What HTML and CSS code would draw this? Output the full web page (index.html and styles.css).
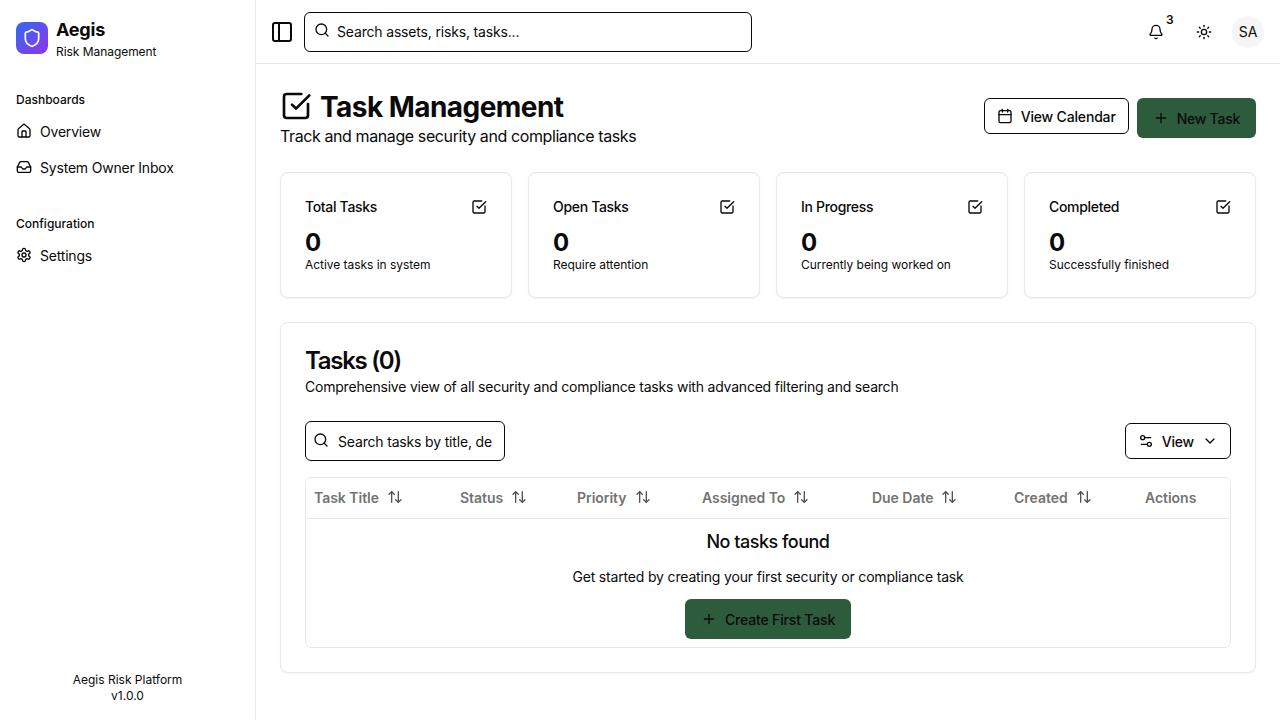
FILE: index.html
```html
<!DOCTYPE html>
<html lang="en">
<head>
  <meta charset="UTF-8">
  <title>Task Management | Aegis</title>
  <link rel="stylesheet" href="styles.css">
</head>
<body>
  <div class="app">

    <!-- Sidebar -->
    <aside class="sidebar">
      <div class="brand">
        <div class="brand-logo">
          <svg width="20" height="20" viewBox="0 0 24 24" class="ic"><path d="M20 13c0 5-3.5 7.5-7.66 8.95a1 1 0 0 1-.67-.01C7.5 20.5 4 18 4 13V6a1 1 0 0 1 1-1c2 0 4.5-1.2 6.24-2.72a1.17 1.17 0 0 1 1.52 0C14.51 3.81 17 5 19 5a1 1 0 0 1 1 1z"/></svg>
        </div>
        <div>
          <div class="brand-name">Aegis</div>
          <div class="brand-sub">Risk Management</div>
        </div>
      </div>

      <div class="nav-label">Dashboards</div>
      <a class="nav-item">
        <svg width="16" height="16" viewBox="0 0 24 24" class="ic"><path d="M15 21v-8a1 1 0 0 0-1-1h-4a1 1 0 0 0-1 1v8"/><path d="M3 10a2 2 0 0 1 .709-1.528l7-5.999a2 2 0 0 1 2.582 0l7 5.999A2 2 0 0 1 21 10v9a2 2 0 0 1-2 2H5a2 2 0 0 1-2-2z"/></svg>
        Overview
      </a>
      <a class="nav-item">
        <svg width="16" height="16" viewBox="0 0 24 24" class="ic"><polyline points="22 12 16 12 14 15 10 15 8 12 2 12"/><path d="M5.45 5.11 2 12v6a2 2 0 0 0 2 2h16a2 2 0 0 0 2-2v-6l-3.45-6.89A2 2 0 0 0 16.76 4H7.24a2 2 0 0 0-1.79 1.11z"/></svg>
        System Owner Inbox
      </a>

      <div class="nav-label nav-label-second">Configuration</div>
      <a class="nav-item">
        <svg width="16" height="16" viewBox="0 0 24 24" class="ic"><path d="M12.22 2h-.44a2 2 0 0 0-2 2v.18a2 2 0 0 1-1 1.73l-.43.25a2 2 0 0 1-2 0l-.15-.08a2 2 0 0 0-2.73.73l-.22.38a2 2 0 0 0 .73 2.73l.15.1a2 2 0 0 1 1 1.72v.51a2 2 0 0 1-1 1.74l-.15.09a2 2 0 0 0-.73 2.73l.22.38a2 2 0 0 0 2.73.73l.15-.08a2 2 0 0 1 2 0l.43.25a2 2 0 0 1 1 1.73V20a2 2 0 0 0 2 2h.44a2 2 0 0 0 2-2v-.18a2 2 0 0 1 1-1.73l.43-.25a2 2 0 0 1 2 0l.15.08a2 2 0 0 0 2.73-.73l.22-.39a2 2 0 0 0-.73-2.73l-.15-.08a2 2 0 0 1-1-1.74v-.5a2 2 0 0 1 1-1.74l.15-.09a2 2 0 0 0 .73-2.73l-.22-.38a2 2 0 0 0-2.73-.73l-.15.08a2 2 0 0 1-2 0l-.43-.25a2 2 0 0 1-1-1.73V4a2 2 0 0 0-2-2z"/><circle cx="12" cy="12" r="3"/></svg>
        Settings
      </a>

      <div class="sidebar-foot">
        <div>Aegis Risk Platform</div>
        <div>v1.0.0</div>
      </div>
    </aside>

    <div class="content">

      <!-- Top bar -->
      <header class="topbar">
        <svg width="24" height="24" viewBox="0 0 24 24" class="ic"><rect x="3" y="3" width="18" height="18" rx="2"/><path d="M9 3v18"/></svg>
        <div class="global-search">
          <svg width="16" height="16" viewBox="0 0 24 24" class="ic"><circle cx="11" cy="11" r="8"/><path d="m21 21-4.3-4.3"/></svg>
          <span>Search assets, risks, tasks...</span>
        </div>
        <div class="topbar-right">
          <div class="bell">
            <svg width="16" height="16" viewBox="0 0 24 24" class="ic"><path d="M10.268 21a2 2 0 0 0 3.464 0"/><path d="M3.262 15.326A1 1 0 0 0 4 17h16a1 1 0 0 0 .74-1.673C19.41 13.956 18 12.499 18 8A6 6 0 0 0 6 8c0 4.499-1.411 5.956-2.738 7.326"/></svg>
            <span class="bell-count">3</span>
          </div>
          <svg width="16" height="16" viewBox="0 0 24 24" class="ic sun"><circle cx="12" cy="12" r="4"/><path d="M12 2v2"/><path d="M12 20v2"/><path d="m4.93 4.93 1.41 1.41"/><path d="m17.66 17.66 1.41 1.41"/><path d="M2 12h2"/><path d="M20 12h2"/><path d="m6.34 17.66-1.41 1.41"/><path d="m19.07 4.93-1.41 1.41"/></svg>
          <div class="avatar">SA</div>
        </div>
      </header>

      <main class="main">
        <div class="page-head">
          <div>
            <h1 class="page-title">
              <svg width="32" height="32" viewBox="0 0 24 24" class="ic"><path d="M21 10.5V19a2 2 0 0 1-2 2H5a2 2 0 0 1-2-2V5a2 2 0 0 1 2-2h11"/><path d="m9 11 3 3L22 4"/></svg>
              <span class="page-title-text">Task Management</span>
            </h1>
            <p class="page-sub">Track and manage security and compliance tasks</p>
          </div>
          <div class="page-actions">
            <button class="btn btn-outline">
              <svg width="16" height="16" viewBox="0 0 24 24" class="ic"><path d="M8 2v4"/><path d="M16 2v4"/><rect x="3" y="4" width="18" height="18" rx="2"/><path d="M3 10h18"/></svg>
              View Calendar
            </button>
            <button class="btn btn-green btn-new">
              <svg width="16" height="16" viewBox="0 0 24 24" class="ic"><path d="M5 12h14"/><path d="M12 5v14"/></svg>
              New Task
            </button>
          </div>
        </div>

        <!-- Stat cards -->
        <div class="stats">
          <div class="card stat">
            <div class="stat-top"><span>Total Tasks</span><svg width="16" height="16" viewBox="0 0 24 24" class="ic"><path d="M21 10.5V19a2 2 0 0 1-2 2H5a2 2 0 0 1-2-2V5a2 2 0 0 1 2-2h11"/><path d="m9 11 3 3L22 4"/></svg></div>
            <div class="stat-num">0</div>
            <div class="stat-note">Active tasks in system</div>
          </div>
          <div class="card stat">
            <div class="stat-top"><span>Open Tasks</span><svg width="16" height="16" viewBox="0 0 24 24" class="ic"><path d="M21 10.5V19a2 2 0 0 1-2 2H5a2 2 0 0 1-2-2V5a2 2 0 0 1 2-2h11"/><path d="m9 11 3 3L22 4"/></svg></div>
            <div class="stat-num">0</div>
            <div class="stat-note">Require attention</div>
          </div>
          <div class="card stat">
            <div class="stat-top"><span>In Progress</span><svg width="16" height="16" viewBox="0 0 24 24" class="ic"><path d="M21 10.5V19a2 2 0 0 1-2 2H5a2 2 0 0 1-2-2V5a2 2 0 0 1 2-2h11"/><path d="m9 11 3 3L22 4"/></svg></div>
            <div class="stat-num">0</div>
            <div class="stat-note">Currently being worked on</div>
          </div>
          <div class="card stat">
            <div class="stat-top"><span>Completed</span><svg width="16" height="16" viewBox="0 0 24 24" class="ic"><path d="M21 10.5V19a2 2 0 0 1-2 2H5a2 2 0 0 1-2-2V5a2 2 0 0 1 2-2h11"/><path d="m9 11 3 3L22 4"/></svg></div>
            <div class="stat-num">0</div>
            <div class="stat-note">Successfully finished</div>
          </div>
        </div>

        <!-- Tasks table -->
        <section class="card tasks">
          <h2 class="tasks-title">Tasks (0)</h2>
          <p class="tasks-sub">Comprehensive view of all security and compliance tasks with advanced filtering and search</p>

          <div class="toolbar">
            <div class="task-search">
              <svg width="16" height="16" viewBox="0 0 24 24" class="ic"><circle cx="11" cy="11" r="8"/><path d="m21 21-4.3-4.3"/></svg>
              <span>Search tasks by title, de</span>
            </div>
            <button class="btn-view">
              <svg width="16" height="16" viewBox="0 0 24 24" class="ic"><path d="M14 17H5"/><path d="M19 7h-9"/><circle cx="17" cy="17" r="3"/><circle cx="7" cy="7" r="3"/></svg>
              View
              <svg width="16" height="16" viewBox="0 0 24 24" class="ic chev"><path d="m6 9 6 6 6-6"/></svg>
            </button>
          </div>

          <div class="table">
            <div class="thead">
              <div class="th">Task Title <svg width="16" height="16" viewBox="0 0 24 24" class="ic"><path d="m21 16-4 4-4-4"/><path d="M17 20V4"/><path d="m3 8 4-4 4 4"/><path d="M7 4v16"/></svg></div>
              <div class="th">Status <svg width="16" height="16" viewBox="0 0 24 24" class="ic"><path d="m21 16-4 4-4-4"/><path d="M17 20V4"/><path d="m3 8 4-4 4 4"/><path d="M7 4v16"/></svg></div>
              <div class="th">Priority <svg width="16" height="16" viewBox="0 0 24 24" class="ic"><path d="m21 16-4 4-4-4"/><path d="M17 20V4"/><path d="m3 8 4-4 4 4"/><path d="M7 4v16"/></svg></div>
              <div class="th">Assigned To <svg width="16" height="16" viewBox="0 0 24 24" class="ic"><path d="m21 16-4 4-4-4"/><path d="M17 20V4"/><path d="m3 8 4-4 4 4"/><path d="M7 4v16"/></svg></div>
              <div class="th">Due Date <svg width="16" height="16" viewBox="0 0 24 24" class="ic"><path d="m21 16-4 4-4-4"/><path d="M17 20V4"/><path d="m3 8 4-4 4 4"/><path d="M7 4v16"/></svg></div>
              <div class="th">Created <svg width="16" height="16" viewBox="0 0 24 24" class="ic"><path d="m21 16-4 4-4-4"/><path d="M17 20V4"/><path d="m3 8 4-4 4 4"/><path d="M7 4v16"/></svg></div>
              <div class="th">Actions</div>
            </div>
            <div class="empty">
              <div class="empty-title">No tasks found</div>
              <p class="empty-sub">Get started by creating your first security or compliance task</p>
              <button class="btn btn-green btn-create">
                <svg width="16" height="16" viewBox="0 0 24 24" class="ic"><path d="M5 12h14"/><path d="M12 5v14"/></svg>
                Create First Task
              </button>
            </div>
          </div>
        </section>
      </main>
    </div>
  </div>
</body>
</html>
```

FILE: styles.css
```css
* { margin: 0; padding: 0; box-sizing: border-box; }
body {
  font-family: Inter, "Liberation Sans", sans-serif;
  background: #fff;
  color: #0a0a0a;
  font-size: 14px;
  letter-spacing: -0.17px;
  overflow: hidden;
}
.ic {
  fill: none;
  stroke: currentColor;
  stroke-width: 2;
  stroke-linecap: round;
  stroke-linejoin: round;
  flex-shrink: 0;
}
.app {
  display: flex;
  height: 720px;
}

/* sidebar */
.sidebar {
  width: 256px;
  flex-shrink: 0;
  border-right: 1px solid #e8e8e8;
  padding: 20px 16px 16px;
  display: flex;
  flex-direction: column;
}
.brand {
  display: flex;
  align-items: flex-start;
  gap: 8px;
  margin-bottom: 32px;
}
.brand-logo {
  width: 32px;
  height: 32px;
  margin-top: 2px;
  border-radius: 8px;
  background: linear-gradient(135deg, #2f6bf0, #9333ea);
  color: #fff;
  display: flex;
  align-items: center;
  justify-content: center;
}
.brand-name {
  font-size: 18px;
  font-weight: 700;
  line-height: 20px;
  letter-spacing: -0.2px;
}
.brand-sub {
  font-size: 12px;
  line-height: 16px;
  margin-top: 4px;
  letter-spacing: -0.05px;
}
.nav-label {
  font-size: 12px;
  font-weight: 500;
  line-height: 16px;
  letter-spacing: 0;
  margin-bottom: 5px;
}
.nav-label-second { margin-top: 31px; }
.nav-item {
  display: flex;
  align-items: center;
  gap: 8px;
  height: 36px;
  font-size: 14px;
  letter-spacing: -0.2px;
}
.sidebar-foot {
  margin-top: auto;
  text-align: center;
  font-size: 12px;
  line-height: 16px;
  letter-spacing: 0;
}

/* top bar */
.content {
  flex: 1;
  min-width: 0;
  display: flex;
  flex-direction: column;
}
.topbar {
  height: 64px;
  flex-shrink: 0;
  border-bottom: 1px solid #e8e8e8;
  padding: 0 16px 0 14px;
  display: flex;
  align-items: center;
  gap: 10px;
}
.global-search {
  width: 448px;
  height: 40px;
  border: 1px solid #0a0a0a;
  border-radius: 6px;
  padding: 0 9px;
  display: flex;
  align-items: center;
  gap: 7px;
}
.global-search .ic { margin-top: -3px; }
.topbar-right {
  margin-left: auto;
  display: flex;
  align-items: center;
}
.bell {
  position: relative;
  display: flex;
  margin-right: 32px;
}
.bell-count {
  position: absolute;
  top: -12px;
  left: 18px;
  font-size: 12px;
  font-weight: 600;
  line-height: 16px;
}
.sun { margin-right: 20px; }
.avatar {
  width: 32px;
  height: 32px;
  border-radius: 50%;
  background: #f5f5f5;
  display: flex;
  align-items: center;
  justify-content: center;
  font-size: 14px;
}

/* main */
.main {
  padding: 24px;
}
.page-head {
  display: flex;
  justify-content: space-between;
  align-items: center;
  margin-bottom: 24px;
}
.page-title {
  display: flex;
  align-items: center;
  gap: 8px;
  font-size: 28px;
  font-weight: 700;
  line-height: 36px;
  letter-spacing: -0.55px;
}
.page-title-text { padding-top: 1px; margin-bottom: -1px; }
.page-sub {
  font-size: 16px;
  line-height: 24px;
  letter-spacing: -0.4px;
}
.page-actions {
  display: flex;
  gap: 8px;
  align-items: flex-start;
}
button {
  font-family: inherit;
  color: inherit;
  letter-spacing: inherit;
  cursor: pointer;
}
.btn {
  display: flex;
  align-items: center;
  justify-content: center;
  gap: 8px;
  border-radius: 6px;
  font-size: 14px;
  font-weight: 450;
}
.btn-outline {
  height: 36px;
  padding: 0 12px;
  background: #fff;
  border: 1px solid #0a0a0a;
}
.btn-green {
  height: 40px;
  padding: 0 16px;
  background: #2d5c3c;
  border: none;
}
.btn-new { letter-spacing: -0.25px; }

/* cards */
.card {
  background: #fff;
  border: 1px solid #e8e8e8;
  border-radius: 8px;
  box-shadow: 0 1px 2px rgba(0,0,0,0.05);
}
.stats {
  display: grid;
  grid-template-columns: repeat(4, 1fr);
  gap: 16px;
  margin-bottom: 24px;
}
.stat {
  height: 126px;
  padding: 24px;
}
.stat-top {
  display: flex;
  justify-content: space-between;
  align-items: center;
  font-weight: 450;
  line-height: 20px;
  letter-spacing: -0.32px;
  margin-bottom: 10px;
}
.stat-num {
  font-size: 24px;
  font-weight: 700;
  line-height: 32px;
  margin-bottom: -2px;
}
.stat-note {
  font-size: 12px;
  line-height: 16px;
  letter-spacing: -0.04px;
}
.tasks {
  padding: 24px;
  height: 351px;
}
.tasks-title {
  font-size: 24px;
  font-weight: 600;
  line-height: 28px;
  letter-spacing: -1.3px;
  margin-bottom: 2px;
}
.tasks-sub {
  line-height: 20px;
  letter-spacing: -0.21px;
  margin-bottom: 24px;
}
.toolbar {
  display: flex;
  justify-content: space-between;
  align-items: center;
  margin-bottom: 16px;
}
.task-search {
  width: 200px;
  height: 40px;
  border: 1px solid #0a0a0a;
  border-radius: 6px;
  padding: 0 7px;
  display: flex;
  align-items: center;
  gap: 9px;
  overflow: hidden;
  white-space: nowrap;
}
.task-search .ic { margin-top: -3px; }
.btn-view {
  display: flex;
  align-items: center;
  gap: 8px;
  height: 36px;
  padding: 0 12px;
  background: #fff;
  border: 1px solid #0a0a0a;
  border-radius: 6px;
  font-size: 14px;
  font-weight: 450;
}
.table {
  border: 1px solid #e8e8e8;
  border-radius: 6px;
}
.thead {
  display: grid;
  grid-template-columns: 146px 117px 125px 170px 142px 131px 93px;
  height: 41px;
  border-bottom: 1px solid #e8e8e8;
}
.th {
  display: flex;
  align-items: center;
  gap: 8px;
  padding: 0 8px 2px;
  font-weight: 600;
  letter-spacing: -0.03px;
  color: #737373;
}
.th .ic { color: #525252; }
.empty {
  display: flex;
  flex-direction: column;
  align-items: center;
  height: 128px;
  padding-top: 9px;
}
.empty-title {
  font-size: 18px;
  font-weight: 450;
  line-height: 28px;
  letter-spacing: -0.5px;
  margin-bottom: 11px;
}
.empty-sub {
  line-height: 20px;
  margin-bottom: 12px;
}
```
